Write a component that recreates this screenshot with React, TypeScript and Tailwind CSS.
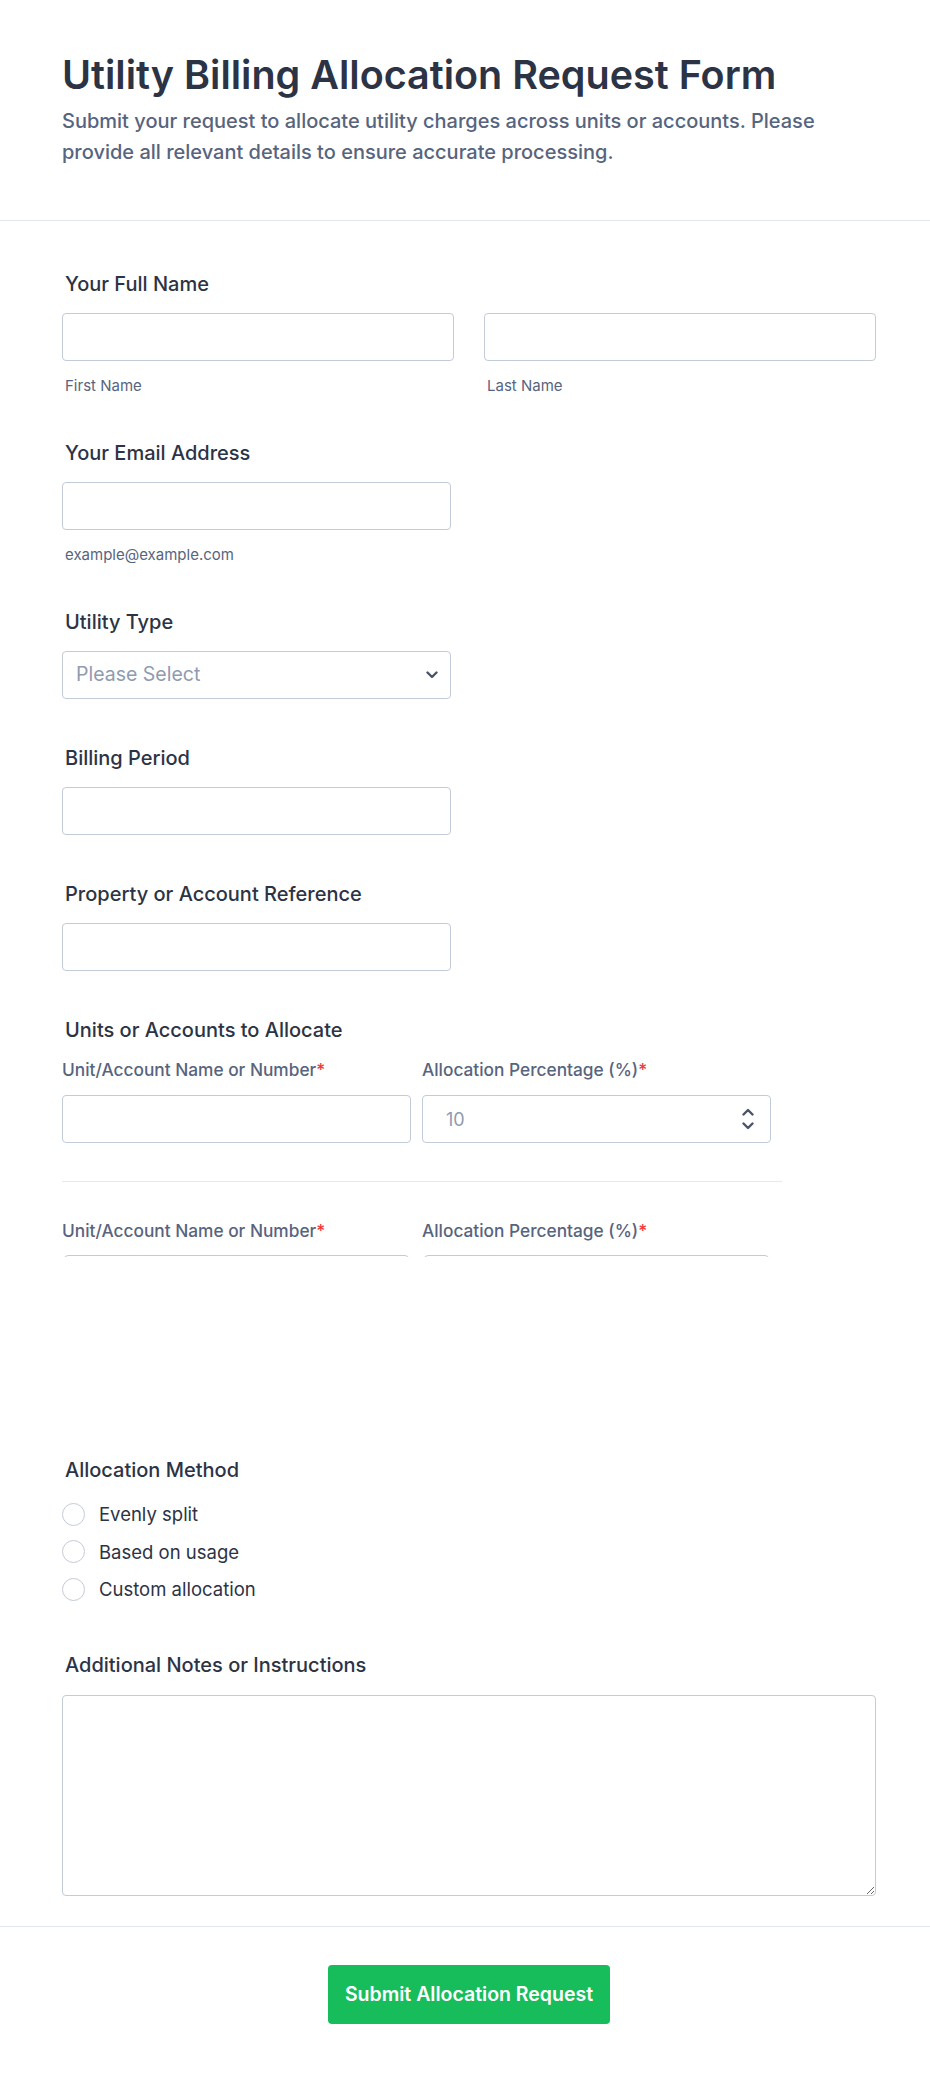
import type { ReactNode } from 'react';

const font = "font-['Inter','Noto_Sans',sans-serif]";

function Label({ children }: { children: ReactNode }) {
  return <label className="block pl-[3px] text-[20px] font-medium leading-6 text-[#2c3345]">{children}</label>;
}

function SubLabel({ children }: { children: ReactNode }) {
  return <span className="mt-4 block pl-[3px] text-[15px] leading-[17px] text-[#57647e]">{children}</span>;
}

function TextInput({ className = 'w-[389px]', placeholder }: { className?: string; placeholder?: string }) {
  return (
    <input
      type="text"
      placeholder={placeholder}
      className={`h-12 rounded-[4px] border border-[#c3cad8] bg-white px-3 text-[18px] text-[#2c3345] outline-none placeholder:text-[#8f9bb0] ${className}`}
    />
  );
}

function ColLabel({ children }: { children: ReactNode }) {
  return (
    <div className="text-[17.3px] font-medium leading-[22px] text-[#57647e]">
      {children}
      <span className="text-[#f23a3c]">*</span>
    </div>
  );
}

function Chevron({ up = false }: { up?: boolean }) {
  return (
    <svg width="12" height="8" viewBox="0 0 12 8" fill="none" className={up ? 'rotate-180' : ''}>
      <path d="M1.5 1.5L6 6L10.5 1.5" stroke="#4a5568" strokeWidth="2.4" strokeLinecap="round" strokeLinejoin="round" />
    </svg>
  );
}

function ClippedInput() {
  return (
    <div className="mt-[13px] h-[2px] overflow-hidden px-[2px]">
      <div className="h-12 rounded-[4px] border border-[#c3cad8]" />
    </div>
  );
}

export default function App() {
  const methods = ['Evenly split', 'Based on usage', 'Custom allocation'];

  return (
    <div className={`min-h-screen bg-white ${font}`}>
      <header className="border-b border-[#e3e6ee] px-[62px] pb-[52px] pt-[51px]">
        <h1 className="text-[39.5px] font-semibold leading-[48px] text-[#2c3345]">
          Utility Billing Allocation Request Form
        </h1>
        <p className="mt-[7px] text-[20px] font-medium leading-[31px] text-[#57647e]">
          Submit your request to allocate utility charges across units or accounts. Please provide all relevant
          details to ensure accurate processing.
        </p>
      </header>

      <main className="flex flex-col gap-[47px] pl-[62px] pr-[54px] pt-[51px]">
        {/* full name */}
        <div>
          <Label>Your Full Name</Label>
          <div className="mt-[17px] grid grid-cols-2 gap-[30px]">
            <div>
              <TextInput className="w-full" />
              <SubLabel>First Name</SubLabel>
            </div>
            <div>
              <TextInput className="w-full" />
              <SubLabel>Last Name</SubLabel>
            </div>
          </div>
        </div>

        <div>
          <Label>Your Email Address</Label>
          <div className="mt-[17px]">
            <TextInput />
            <SubLabel>example@example.com</SubLabel>
          </div>
        </div>

        <div>
          <Label>Utility Type</Label>
          <div className="mt-[17px] flex h-12 w-[389px] items-center justify-between rounded-[4px] border border-[#c3cad8] pl-[13px] pr-[12px]">
            <span className="text-[19.5px] text-[#8f9bb0]">Please Select</span>
            <Chevron />
          </div>
        </div>

        <div>
          <Label>Billing Period</Label>
          <div className="mt-[17px]">
            <TextInput />
          </div>
        </div>

        <div>
          <Label>Property or Account Reference</Label>
          <div className="mt-[17px]">
            <TextInput />
          </div>
        </div>

        {/* allocation table */}
        <div>
          <Label>Units or Accounts to Allocate</Label>
          <div className="mt-[17px] h-[352px] w-[720px] overflow-hidden">
            <div className="grid grid-cols-2">
              <div className="pr-[11px]">
                <ColLabel>Unit/Account Name or Number</ColLabel>
                <TextInput className="mt-[14px] w-full" />
              </div>
              <div className="pr-[11px]">
                <ColLabel>Allocation Percentage (%)</ColLabel>
                <div className="relative mt-[14px]">
                  <TextInput className="w-full pl-[23px]" placeholder="10" />
                  <div className="absolute right-[17px] top-1/2 flex -translate-y-1/2 flex-col gap-[6px]">
                    <Chevron up />
                    <Chevron />
                  </div>
                </div>
              </div>
            </div>
            <div className="my-[38px] border-t border-[#e6e9f0]" />
            <div className="grid grid-cols-2">
              <div className="pr-[11px]">
                <ColLabel>Unit/Account Name or Number</ColLabel>
                <ClippedInput />
              </div>
              <div className="pr-[11px]">
                <ColLabel>Allocation Percentage (%)</ColLabel>
                <ClippedInput />
              </div>
            </div>
          </div>
        </div>

        <div>
          <Label>Allocation Method</Label>
          <div className="mt-[19px] flex flex-col gap-[11.5px]">
            {methods.map((m) => (
              <label key={m} className="flex h-[26px] items-center gap-[14px]">
                <span className="h-[23px] w-[23px] rounded-full border border-[#c3cad8] bg-white" />
                <span className="text-[18.5px] leading-[26px] text-[#2c3345]">{m}</span>
              </label>
            ))}
          </div>
        </div>

        <div className="mt-1">
          <Label>Additional Notes or Instructions</Label>
          <textarea className="mt-[18px] block h-[201px] w-full rounded-[4px] border border-[#c3cad8] p-3 text-[18px] outline-none" />
        </div>
      </main>

      <footer className="mt-[30px] flex justify-center border-t border-[#e3e6ee] pb-[44px] pl-[62px] pr-[54px] pt-[38px]">
        <button className="h-[59px] rounded-[4px] bg-[#18bd5b] px-[17px] text-[19.5px] font-semibold text-white">
          Submit Allocation Request
        </button>
      </footer>
    </div>
  );
}
